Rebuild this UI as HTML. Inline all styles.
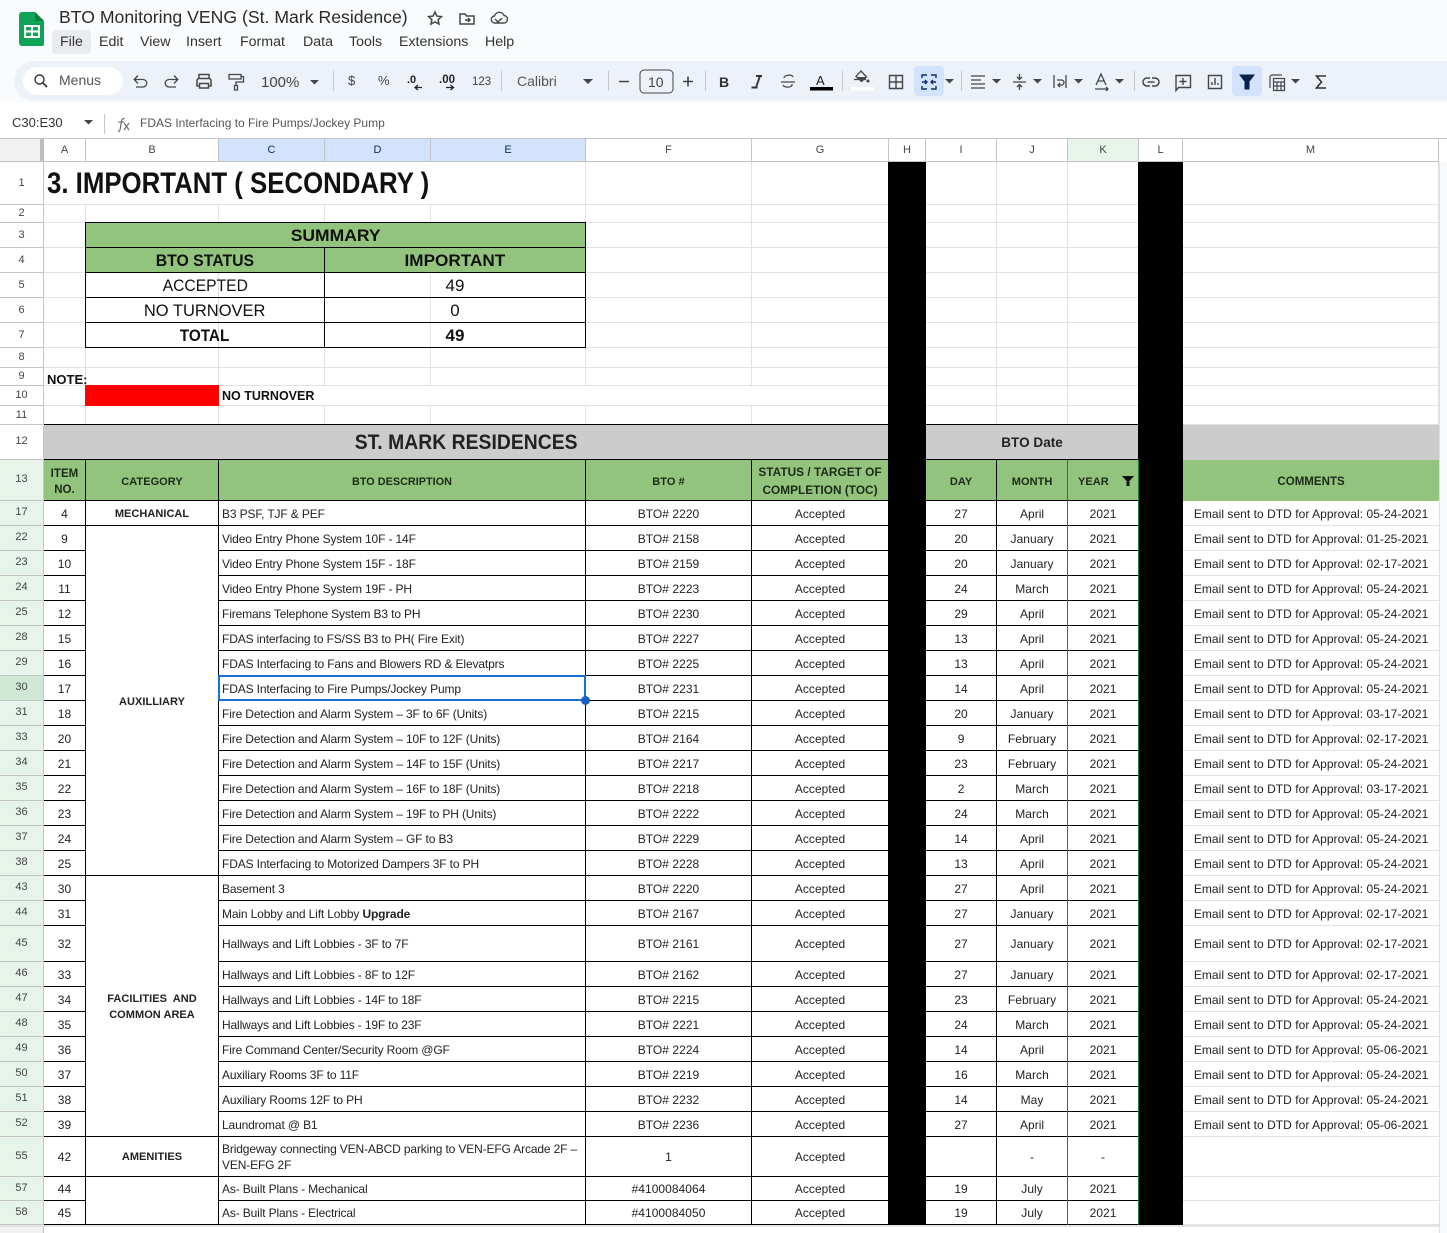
<!DOCTYPE html>
<html><head><meta charset="utf-8"><title>BTO Monitoring VENG</title>
<style>
html,body{margin:0;padding:0;width:1447px;height:1233px;overflow:hidden;background:#fff;font-family:"Liberation Sans",sans-serif;color:#222}
.a{position:absolute}
table{border-collapse:separate;border-spacing:0;table-layout:fixed;position:absolute;left:0;width:1439px}
td,th{box-sizing:border-box;padding:0;overflow:hidden;white-space:nowrap}
.top td{border-right:1px solid #e2e2e2;border-bottom:1px solid #e2e2e2}
th{font-weight:400;font-size:11px;color:#444;border-right:1px solid #c4c4c4;border-bottom:1px solid #c4c4c4;padding-bottom:1px}
.bot th{padding-bottom:2px}
.bot td{border-right:1px solid #000;border-bottom:1px solid #000;text-align:center;font-size:12px;letter-spacing:.04px;color:#222;padding-top:2px}
.bot tr.z td{padding-top:0}
.bot th{background:#e6f4ea}
.bot td.l{text-align:left;padding-left:3px;letter-spacing:-.14px}
.bot td.m{border-right:0;border-bottom:1px solid #e2e2e2}
.bot td.b{font-weight:700;font-size:11px}
.bot tr.h td{background:#93c47d;font-weight:700;font-size:11px;line-height:16px;color:#1c2a18;padding-top:3px}
.bot tr.g td{background:#ccc;font-weight:700}
.hd{position:absolute;top:138px;height:24px;box-sizing:border-box;border-right:1px solid #c4c4c4;border-bottom:1px solid #c4c4c4;border-top:1px solid #c4c4c4;text-align:center;font-size:11px;line-height:22px;color:#444}
.sum{left:85px;top:222px;width:501px;border-top:1px solid #000;border-left:1px solid #000}
.sum td{border-right:1px solid #000;border-bottom:1px solid #000;text-align:center;font-size:17px;color:#111;height:25px;line-height:22px;padding-top:2px}
.sum tr.h td{background:#93c47d;font-weight:700}
.sum .b{font-weight:700}
.sum span{display:inline-block}
.mn{position:absolute;top:34px;font-size:14.2px;color:#333;line-height:16px}
</style></head><body>

<div class="a" style="left:0;top:0;width:1447px;height:103px;background:#f9fbfd"></div>
<div class="a" style="left:14px;top:61px;width:1433px;height:40px;background:#edf2fa;border-radius:20px 0 0 20px"></div>
<div class="a" style="left:23px;top:67px;width:100px;height:28px;background:#fff;border-radius:14px"></div>
<div class="a" style="left:52px;top:30px;width:39px;height:24px;background:#e9ebee;border-radius:4px"></div>
<div class="a" style="left:914px;top:66px;width:30px;height:30px;background:#d3e3fd;border-radius:4px"></div>
<div class="a" style="left:1232px;top:66px;width:30px;height:30px;background:#d3e3fd;border-radius:4px"></div>

<div class="a" style="left:59px;top:6px;font-size:17.65px;line-height:22px;color:#2b2b2b;white-space:nowrap">BTO Monitoring VENG (St. Mark Residence)</div>
<div class="mn" style="left:60px">File</div><div class="mn" style="left:99px">Edit</div><div class="mn" style="left:140px">View</div><div class="mn" style="left:186px">Insert</div><div class="mn" style="left:240px">Format</div><div class="mn" style="left:303px">Data</div><div class="mn" style="left:349px">Tools</div><div class="mn" style="left:399px">Extensions</div><div class="mn" style="left:485px">Help</div>

<svg class="a" style="left:0;top:0" width="1447" height="138" viewBox="0 0 1447 138" fill="none" stroke="#444746" stroke-width="1.5">
<path d="M22 12h13l9 9v23a2 2 0 0 1-2 2H22a3 3 0 0 1-3-3V15a3 3 0 0 1 3-3z" fill="#0fa456" stroke="none"/>
<path d="M35 12l9 9h-9z" fill="#0a7f40" stroke="none"/>
<path d="M25 26h14v11H25z M32 26v11 M25 31.500h14" stroke="#fff" stroke-width="2"/>
<path d="M435 12l1.900 4.100 4.500.5-3.300 3.100.9 4.400-4-2.200-4 2.200.9-4.400-3.300-3.100 4.500-.5z"/>
<path d="M460 14h5l1.500 2H474v8h-14z M465 20h5 M468 18l2 2-2 2"/>
<path d="M495 23a3.500 3.500 0 0 1-.5-7 5 5 0 0 1 9.500-.5 3.800 3.800 0 0 1 .5 7.500z M495 19l3 3 4-4" stroke-width="1.400"/>
<circle cx="39.500" cy="79.500" r="4.500" stroke="#333" stroke-width="1.400"/><path d="M43 83l4 4" stroke="#333" stroke-width="1.700"/>
<path d="M134.500 79.500h8.500a3.500 3.500 0 0 1 0 7.500h-7 M138 75.500l-3.800 4 3.800 4" stroke-width="1.300"/>
<path d="M177.500 79.500H169a3.500 3.500 0 0 0 0 7.500h7 M174 75.500l3.800 4-3.800 4" stroke-width="1.300"/>
<path d="M199 79v-4.500h10V79 M198.500 86h-1.500v-5.500a2 2 0 0 1 2-2h10a2 2 0 0 1 2 2V86h-1.500 M199.500 83.500h9V88h-9z" stroke-width="1.500"/>
<path d="M229 74.500h12v4.500h-12z M241 76.500h2.500V82H236v3.500 M234.500 85.500h3v4.500h-3z" stroke-width="1.300"/>
<path d="M310 80h9l-4.500 4.500z M583 79h10l-5 5z M945 79h9l-4.500 4.500z M992 79h9l-4.500 4.500z M1033 79h9l-4.500 4.500z M1074 79h9l-4.500 4.500z M1115 79h9l-4.500 4.500z M1291 79h9l-4.500 4.500z M84 120h9l-4.500 4.500z" fill="#444746" stroke="none"/>
<path d="M333.500 71v20 M501.500 71v20 M608.500 71v20 M705.500 71v20 M842.500 71v20 M961.500 71v20 M1134.500 71v20 M104.500 114v20" stroke="#c7c7c7" stroke-width="1"/>
<rect x="640" y="70" width="33" height="23" rx="4" stroke="#444" stroke-width="1"/>
<path d="M619 81.500h10 M683 81.500h10 M688 76.500v10" stroke-width="1.600"/>
<path d="M415 87.500h7 M418 85l-3 2.500 3 2.500 M446 87.500h7 M450.500 85l3 2.500-3 2.500" stroke="#222" stroke-width="1.300"/>
<path d="M751.500 87.500h6 M756 76h6 M760 76l-4 11.500" stroke="#333" stroke-width="1.900" fill="none"/>
<path d="M781 82h14 M784 78c0-3 8-4 9-1 M792 84c1 4-8 4-9 1" stroke-width="1.300"/>
<rect x="810" y="87" width="23" height="3.500" fill="#000" stroke="none"/>
<path d="M861 71l-5 5.500 5.500 5 5-4.500z M854 79.500h12" fill="none" stroke-width="1.300"/>
<path d="M856.500 77h9.500l-4.500 4.500z" fill="#444746" stroke="none"/>
<circle cx="868" cy="81" r="1.500" fill="#444746" stroke="none"/>
<rect x="851" y="87" width="23" height="3.500" fill="#fff" stroke="none"/>
<path d="M889.500 75.500h13v13h-13z M896 75.500v13 M889.500 82h13" stroke-width="1.400"/>
<path d="M922 78v-3h5 M922 86v3h5 M936 78v-3h-5 M936 86v3h-5 M922 82h5 M936 82h-5 M925 80l2 2-2 2 M933 80l-2 2 2 2" stroke="#0b2f63" stroke-width="1.400"/>
<path d="M971 76h14 M971 80h10 M971 84h14 M971 88h14" stroke-width="1.300"/>
<path d="M1013 82h13 M1019.500 74v5 M1017 77l2.500 2.500 2.500-2.500 M1019.500 90v-5 M1017 87l2.500-2.500 2.500 2.500" stroke-width="1.300"/>
<path d="M1054 75v13 M1066 75v13 M1057 80h4.500a2 2 0 0 1 0 5H1059 M1060 83l-2 2 2 2" stroke-width="1.300"/>
<path d="M1096 85l5-11 5 11 M1098 81h6 M1095 89h13 M1106 87l2 2-2 2" stroke-width="1.300"/>
<path d="M1150 78h-3a4 4 0 0 0 0 8h3 M1152 78h3a4 4 0 0 1 0 8h-3 M1147.500 82h7" stroke-width="1.500"/>
<path d="M1176 75.500h14.500v12h-12l-2.500 3z M1183 78v7 M1179.500 81.500h7" stroke-width="1.400"/>
<path d="M1208.500 75.500h13v13h-13z M1212 85v-3 M1215 85v-7 M1218 85v-2" stroke-width="1.400"/>
<path d="M1240 75h14l-5 6.500V89h-4v-7.500z" fill="#0b1f4b" stroke="#0b1f4b" stroke-width="1"/>
<path d="M1270 88V77a2 2 0 0 1 2-2h10 M1273.500 78.500h11v12h-11z M1273.500 82h11 M1277 82v8 M1281 82v8 M1273.500 86h11" stroke-width="1.200"/>
<path d="M1326 76h-9.500l5 6-5 6h9.500" stroke="#333" stroke-width="1.600"/>
<path d="M118 131c2 1 2-1 2.500-4l1-6c.5-2 1.500-3 3-2 M118 122h6 M124 123l5 7 M129 123l-5 7" stroke="#666" stroke-width="1.100"/>
<g font-family="Liberation Sans,sans-serif" stroke="none" fill="#444">
<text x="59" y="85" font-size="14" fill="#555">Menus</text>
<text x="261" y="87" font-size="15" fill="#444">100%</text>
<text x="348" y="85" font-size="13">$</text>
<text x="378" y="85" font-size="13">%</text>
<text x="407" y="83" font-size="11" font-weight="700" fill="#222">.0</text>
<text x="439" y="83" font-size="11.500" font-weight="700" fill="#222">.00</text>
<text x="472" y="85" font-size="11.500">123</text>
<text x="517" y="86" font-size="14" fill="#555">Calibri</text>
<text x="648" y="87" font-size="14">10</text>
<text x="719" y="87" font-size="14" font-weight="700" fill="#333">B</text>
<text x="816" y="85" font-size="13" fill="#222">A</text>
<text x="12" y="127" font-size="13" fill="#333">C30:E30</text>
<text x="140" y="127" font-size="12" fill="#555">FDAS Interfacing to Fire Pumps/Jockey Pump</text>
</g>
</svg>

<div class="a" style="left:0;top:138px;width:1447px;height:1px;background:#c4c4c4"></div>
<div class="hd" style="left:0;width:44px;background:#f1f1f1;border-right:4px solid #bdbdbd"></div>
<div class="hd" style="left:44px;width:42px">A</div>
<div class="hd" style="left:86px;width:133px">B</div>
<div class="hd" style="left:219px;width:106px;background:#d3e3fd;color:#0b2f63">C</div>
<div class="hd" style="left:325px;width:106px;background:#d3e3fd;color:#0b2f63">D</div>
<div class="hd" style="left:431px;width:155px;background:#d3e3fd;color:#0b2f63">E</div>
<div class="hd" style="left:586px;width:166px">F</div>
<div class="hd" style="left:752px;width:137px">G</div>
<div class="hd" style="left:889px;width:37px">H</div>
<div class="hd" style="left:926px;width:71px">I</div>
<div class="hd" style="left:997px;width:71px">J</div>
<div class="hd" style="left:1068px;width:71px;background:#e6f4ea">K</div>
<div class="hd" style="left:1139px;width:44px">L</div>
<div class="hd" style="left:1183px;width:256px">M</div>

<table class="top" style="top:162px">
<colgroup><col style="width:44px"><col style="width:42px"><col style="width:133px"><col style="width:106px"><col style="width:106px"><col style="width:155px"><col style="width:166px"><col style="width:137px"><col style="width:37px"><col style="width:71px"><col style="width:71px"><col style="width:71px"><col style="width:44px"><col style="width:256px"></colgroup>
<tr style="height:43px"><th>1</th><td colspan="5"></td><td></td><td></td><td></td><td></td><td></td><td></td><td></td><td></td></tr>
<tr style="height:18px"><th>2</th><td></td><td></td><td></td><td></td><td></td><td></td><td></td><td></td><td></td><td></td><td></td><td></td><td></td></tr>
<tr style="height:25px"><th>3</th><td></td><td></td><td></td><td></td><td></td><td></td><td></td><td></td><td></td><td></td><td></td><td></td><td></td></tr>
<tr style="height:25px"><th>4</th><td></td><td></td><td></td><td></td><td></td><td></td><td></td><td></td><td></td><td></td><td></td><td></td><td></td></tr>
<tr style="height:25px"><th>5</th><td></td><td></td><td></td><td></td><td></td><td></td><td></td><td></td><td></td><td></td><td></td><td></td><td></td></tr>
<tr style="height:25px"><th>6</th><td></td><td></td><td></td><td></td><td></td><td></td><td></td><td></td><td></td><td></td><td></td><td></td><td></td></tr>
<tr style="height:25px"><th>7</th><td></td><td></td><td></td><td></td><td></td><td></td><td></td><td></td><td></td><td></td><td></td><td></td><td></td></tr>
<tr style="height:20px"><th>8</th><td></td><td></td><td></td><td></td><td></td><td></td><td></td><td></td><td></td><td></td><td></td><td></td><td></td></tr>
<tr style="height:18px"><th>9</th><td></td><td></td><td></td><td></td><td></td><td></td><td></td><td></td><td></td><td></td><td></td><td></td><td></td></tr>
<tr style="height:20px"><th>10</th><td></td><td></td><td colspan="5"></td><td></td><td></td><td></td><td></td><td></td><td></td></tr>
<tr style="height:19px"><th>11</th><td></td><td></td><td></td><td></td><td></td><td></td><td></td><td></td><td></td><td></td><td></td><td></td><td></td></tr>
</table>

<div class="a" style="left:85px;top:385px;width:134px;height:21px;background:#f00"></div>
<div class="a" style="left:47px;top:166px;font-size:30px;line-height:36px;font-weight:700;color:#111;white-space:nowrap"><span style="display:inline-block;transform-origin:0 50%;transform:scaleX(.86)">3. IMPORTANT ( SECONDARY )</span></div>
<div class="a" style="left:47px;top:372px;font-size:13px;line-height:16px;font-weight:700;color:#111">NOTE:</div>
<div class="a" style="left:222px;top:388px;font-size:12.500px;line-height:16px;font-weight:700;color:#111">NO TURNOVER</div>

<table class="sum">
<colgroup><col style="width:239px"><col style="width:261px"></colgroup>
<tr class="h"><td colspan="2"><span style="transform:scaleX(1.03)">SUMMARY</span></td></tr>
<tr class="h"><td><span style="transform:scaleX(.93)">BTO STATUS</span></td><td><span style="transform:scaleX(1.01)">IMPORTANT</span></td></tr>
<tr><td><span style="transform:scaleX(.92)">ACCEPTED</span></td><td>49</td></tr>
<tr><td><span style="transform:scaleX(.97)">NO TURNOVER</span></td><td>0</td></tr>
<tr><td class="b"><span style="transform:scaleX(.9)">TOTAL</span></td><td class="b">49</td></tr>
</table>

<table class="bot" style="top:425px">
<colgroup><col style="width:44px"><col style="width:42px"><col style="width:133px"><col style="width:106px"><col style="width:106px"><col style="width:155px"><col style="width:166px"><col style="width:137px"><col style="width:37px"><col style="width:71px"><col style="width:71px"><col style="width:71px"><col style="width:44px"><col style="width:256px"></colgroup>
<tr class="g" style="height:35px"><th style="background:#fff">12</th><td colspan="7" style="font-size:21px"><span style="display:inline-block;transform:scaleX(.92)">ST. MARK RESIDENCES</span></td><td></td><td colspan="3" style="font-size:13.500px;padding-top:0">BTO Date</td><td></td><td style="border:0"></td></tr>
<tr class="h" style="height:41px"><th>13</th><td style="font-size:11.500px">ITEM<br>NO.</td><td>CATEGORY</td><td colspan="3" style="font-size:10.800px">BTO DESCRIPTION</td><td>BTO #</td><td style="font-size:11.800px;line-height:18px;padding-top:2px">STATUS / TARGET OF<br>COMPLETION (TOC)</td><td></td><td>DAY</td><td>MONTH</td><td style="text-align:left;padding-left:10px">YEAR</td><td></td><td style="border:0;font-size:11.500px">COMMENTS</td></tr>
<tr style="height:25px"><th>17</th><td>4</td><td class="b">MECHANICAL</td><td class="l" colspan="3">B3 PSF, TJF &amp; PEF</td><td>BTO# 2220</td><td>Accepted</td><td></td><td>27</td><td>April</td><td>2021</td><td></td><td class="m">Email sent to DTD for Approval: 05-24-2021</td></tr>
<tr style="height:25px"><th>22</th><td>9</td><td class="b" rowspan="14">AUXILLIARY</td><td class="l" colspan="3">Video Entry Phone System 10F - 14F</td><td>BTO# 2158</td><td>Accepted</td><td></td><td>20</td><td>January</td><td>2021</td><td></td><td class="m">Email sent to DTD for Approval: 01-25-2021</td></tr>
<tr style="height:25px"><th>23</th><td>10</td><td class="l" colspan="3">Video Entry Phone System 15F - 18F</td><td>BTO# 2159</td><td>Accepted</td><td></td><td>20</td><td>January</td><td>2021</td><td></td><td class="m">Email sent to DTD for Approval: 02-17-2021</td></tr>
<tr style="height:25px"><th>24</th><td>11</td><td class="l" colspan="3">Video Entry Phone System 19F - PH</td><td>BTO# 2223</td><td>Accepted</td><td></td><td>24</td><td>March</td><td>2021</td><td></td><td class="m">Email sent to DTD for Approval: 05-24-2021</td></tr>
<tr style="height:25px"><th>25</th><td>12</td><td class="l" colspan="3">Firemans Telephone System B3 to PH</td><td>BTO# 2230</td><td>Accepted</td><td></td><td>29</td><td>April</td><td>2021</td><td></td><td class="m">Email sent to DTD for Approval: 05-24-2021</td></tr>
<tr style="height:25px"><th>28</th><td>15</td><td class="l" colspan="3">FDAS interfacing to FS/SS B3 to PH( Fire Exit)</td><td>BTO# 2227</td><td>Accepted</td><td></td><td>13</td><td>April</td><td>2021</td><td></td><td class="m">Email sent to DTD for Approval: 05-24-2021</td></tr>
<tr style="height:25px"><th>29</th><td>16</td><td class="l" colspan="3">FDAS Interfacing to Fans and Blowers RD &amp; Elevatprs</td><td>BTO# 2225</td><td>Accepted</td><td></td><td>13</td><td>April</td><td>2021</td><td></td><td class="m">Email sent to DTD for Approval: 05-24-2021</td></tr>
<tr style="height:25px"><th style="background:#cfe8d6">30</th><td>17</td><td class="l" colspan="3">FDAS Interfacing to Fire Pumps/Jockey Pump</td><td>BTO# 2231</td><td>Accepted</td><td></td><td>14</td><td>April</td><td>2021</td><td></td><td class="m">Email sent to DTD for Approval: 05-24-2021</td></tr>
<tr style="height:25px"><th>31</th><td>18</td><td class="l" colspan="3">Fire Detection and Alarm System – 3F to 6F (Units)</td><td>BTO# 2215</td><td>Accepted</td><td></td><td>20</td><td>January</td><td>2021</td><td></td><td class="m">Email sent to DTD for Approval: 03-17-2021</td></tr>
<tr style="height:25px"><th>33</th><td>20</td><td class="l" colspan="3">Fire Detection and Alarm System – 10F to 12F (Units)</td><td>BTO# 2164</td><td>Accepted</td><td></td><td>9</td><td>February</td><td>2021</td><td></td><td class="m">Email sent to DTD for Approval: 02-17-2021</td></tr>
<tr style="height:25px"><th>34</th><td>21</td><td class="l" colspan="3">Fire Detection and Alarm System – 14F to 15F (Units)</td><td>BTO# 2217</td><td>Accepted</td><td></td><td>23</td><td>February</td><td>2021</td><td></td><td class="m">Email sent to DTD for Approval: 05-24-2021</td></tr>
<tr style="height:25px"><th>35</th><td>22</td><td class="l" colspan="3">Fire Detection and Alarm System – 16F to 18F (Units)</td><td>BTO# 2218</td><td>Accepted</td><td></td><td>2</td><td>March</td><td>2021</td><td></td><td class="m">Email sent to DTD for Approval: 03-17-2021</td></tr>
<tr style="height:25px"><th>36</th><td>23</td><td class="l" colspan="3">Fire Detection and Alarm System – 19F to PH (Units)</td><td>BTO# 2222</td><td>Accepted</td><td></td><td>24</td><td>March</td><td>2021</td><td></td><td class="m">Email sent to DTD for Approval: 05-24-2021</td></tr>
<tr style="height:25px"><th>37</th><td>24</td><td class="l" colspan="3">Fire Detection and Alarm System – GF to B3</td><td>BTO# 2229</td><td>Accepted</td><td></td><td>14</td><td>April</td><td>2021</td><td></td><td class="m">Email sent to DTD for Approval: 05-24-2021</td></tr>
<tr style="height:25px"><th>38</th><td>25</td><td class="l" colspan="3">FDAS Interfacing to Motorized Dampers 3F to PH</td><td>BTO# 2228</td><td>Accepted</td><td></td><td>13</td><td>April</td><td>2021</td><td></td><td class="m">Email sent to DTD for Approval: 05-24-2021</td></tr>
<tr style="height:25px"><th>43</th><td>30</td><td class="b" rowspan="10" style="line-height:16px;white-space:normal">FACILITIES&nbsp; AND<br>COMMON AREA</td><td class="l" colspan="3">Basement 3</td><td>BTO# 2220</td><td>Accepted</td><td></td><td>27</td><td>April</td><td>2021</td><td></td><td class="m">Email sent to DTD for Approval: 05-24-2021</td></tr>
<tr style="height:25px"><th>44</th><td>31</td><td class="l" colspan="3">Main Lobby and Lift Lobby <b>Upgrade</b></td><td>BTO# 2167</td><td>Accepted</td><td></td><td>27</td><td>January</td><td>2021</td><td></td><td class="m">Email sent to DTD for Approval: 02-17-2021</td></tr>
<tr class="z" style="height:36px"><th>45</th><td>32</td><td class="l" colspan="3">Hallways and Lift Lobbies - 3F to 7F</td><td>BTO# 2161</td><td>Accepted</td><td></td><td>27</td><td>January</td><td>2021</td><td></td><td class="m">Email sent to DTD for Approval: 02-17-2021</td></tr>
<tr style="height:25px"><th>46</th><td>33</td><td class="l" colspan="3">Hallways and Lift Lobbies - 8F to 12F</td><td>BTO# 2162</td><td>Accepted</td><td></td><td>27</td><td>January</td><td>2021</td><td></td><td class="m">Email sent to DTD for Approval: 02-17-2021</td></tr>
<tr style="height:25px"><th>47</th><td>34</td><td class="l" colspan="3">Hallways and Lift Lobbies - 14F to 18F</td><td>BTO# 2215</td><td>Accepted</td><td></td><td>23</td><td>February</td><td>2021</td><td></td><td class="m">Email sent to DTD for Approval: 05-24-2021</td></tr>
<tr style="height:25px"><th>48</th><td>35</td><td class="l" colspan="3">Hallways and Lift Lobbies - 19F to 23F</td><td>BTO# 2221</td><td>Accepted</td><td></td><td>24</td><td>March</td><td>2021</td><td></td><td class="m">Email sent to DTD for Approval: 05-24-2021</td></tr>
<tr style="height:25px"><th>49</th><td>36</td><td class="l" colspan="3">Fire Command Center/Security Room @GF</td><td>BTO# 2224</td><td>Accepted</td><td></td><td>14</td><td>April</td><td>2021</td><td></td><td class="m">Email sent to DTD for Approval: 05-06-2021</td></tr>
<tr style="height:25px"><th>50</th><td>37</td><td class="l" colspan="3">Auxiliary Rooms 3F to 11F</td><td>BTO# 2219</td><td>Accepted</td><td></td><td>16</td><td>March</td><td>2021</td><td></td><td class="m">Email sent to DTD for Approval: 05-24-2021</td></tr>
<tr style="height:25px"><th>51</th><td>38</td><td class="l" colspan="3">Auxiliary Rooms 12F to PH</td><td>BTO# 2232</td><td>Accepted</td><td></td><td>14</td><td>May</td><td>2021</td><td></td><td class="m">Email sent to DTD for Approval: 05-24-2021</td></tr>
<tr style="height:25px"><th>52</th><td>39</td><td class="l" colspan="3">Laundromat @ B1</td><td>BTO# 2236</td><td>Accepted</td><td></td><td>27</td><td>April</td><td>2021</td><td></td><td class="m">Email sent to DTD for Approval: 05-06-2021</td></tr>
<tr class="z" style="height:40px"><th>55</th><td>42</td><td class="b">AMENITIES</td><td class="l" colspan="3" style="line-height:16px">Bridgeway connecting VEN-ABCD parking to VEN-EFG Arcade 2F –<br>VEN-EFG 2F</td><td>1</td><td>Accepted</td><td></td><td></td><td>-</td><td>-</td><td></td><td class="m"></td></tr>
<tr class="z" style="height:24px"><th>57</th><td>44</td><td rowspan="2"></td><td class="l" colspan="3">As- Built Plans - Mechanical</td><td>#4100084064</td><td>Accepted</td><td></td><td>19</td><td>July</td><td>2021</td><td></td><td class="m"></td></tr>
<tr class="z" style="height:24px"><th>58</th><td>45</td><td class="l" colspan="3">As- Built Plans - Electrical</td><td>#4100084050</td><td>Accepted</td><td></td><td>19</td><td>July</td><td>2021</td><td></td><td class="m"></td></tr>
</table>

<div class="a" style="left:44px;top:424px;width:844px;height:1px;background:#000"></div>
<div class="a" style="left:926px;top:424px;width:212px;height:1px;background:#000"></div>
<div class="a" style="left:888px;top:162px;width:38px;height:1063px;background:#000"></div>
<div class="a" style="left:1138px;top:162px;width:45px;height:1063px;background:#000"></div>
<div class="a" style="left:1067px;top:460px;width:1px;height:765px;background:#1e7a45"></div>
<div class="a" style="left:1138px;top:460px;width:1px;height:765px;background:#1e7a45"></div>
<svg class="a" style="left:1121px;top:475px" width="14" height="12" viewBox="0 0 14 12"><path d="M1 1h12L8.500 6v5h-3V6z" fill="#111"/></svg>
<div class="a" style="left:0;top:1225px;width:1439px;height:2px;background:#e4e4e4"></div>
<div class="a" style="left:0;top:1227px;width:43px;height:6px;background:#f1f1f1;border-right:1px solid #c4c4c4"></div>
<div class="a" style="left:1439px;top:162px;width:8px;height:1071px;background:#f8f9fa;border-left:1px solid #e0e0e0;box-sizing:border-box"></div>

<div class="a" style="left:218px;top:675px;width:368px;height:26px;box-sizing:border-box;border:2px solid #1a6fd4"></div>
<div class="a" style="left:581px;top:696px;width:9px;height:9px;border-radius:50%;background:#1a5fc4"></div>
</body></html>
